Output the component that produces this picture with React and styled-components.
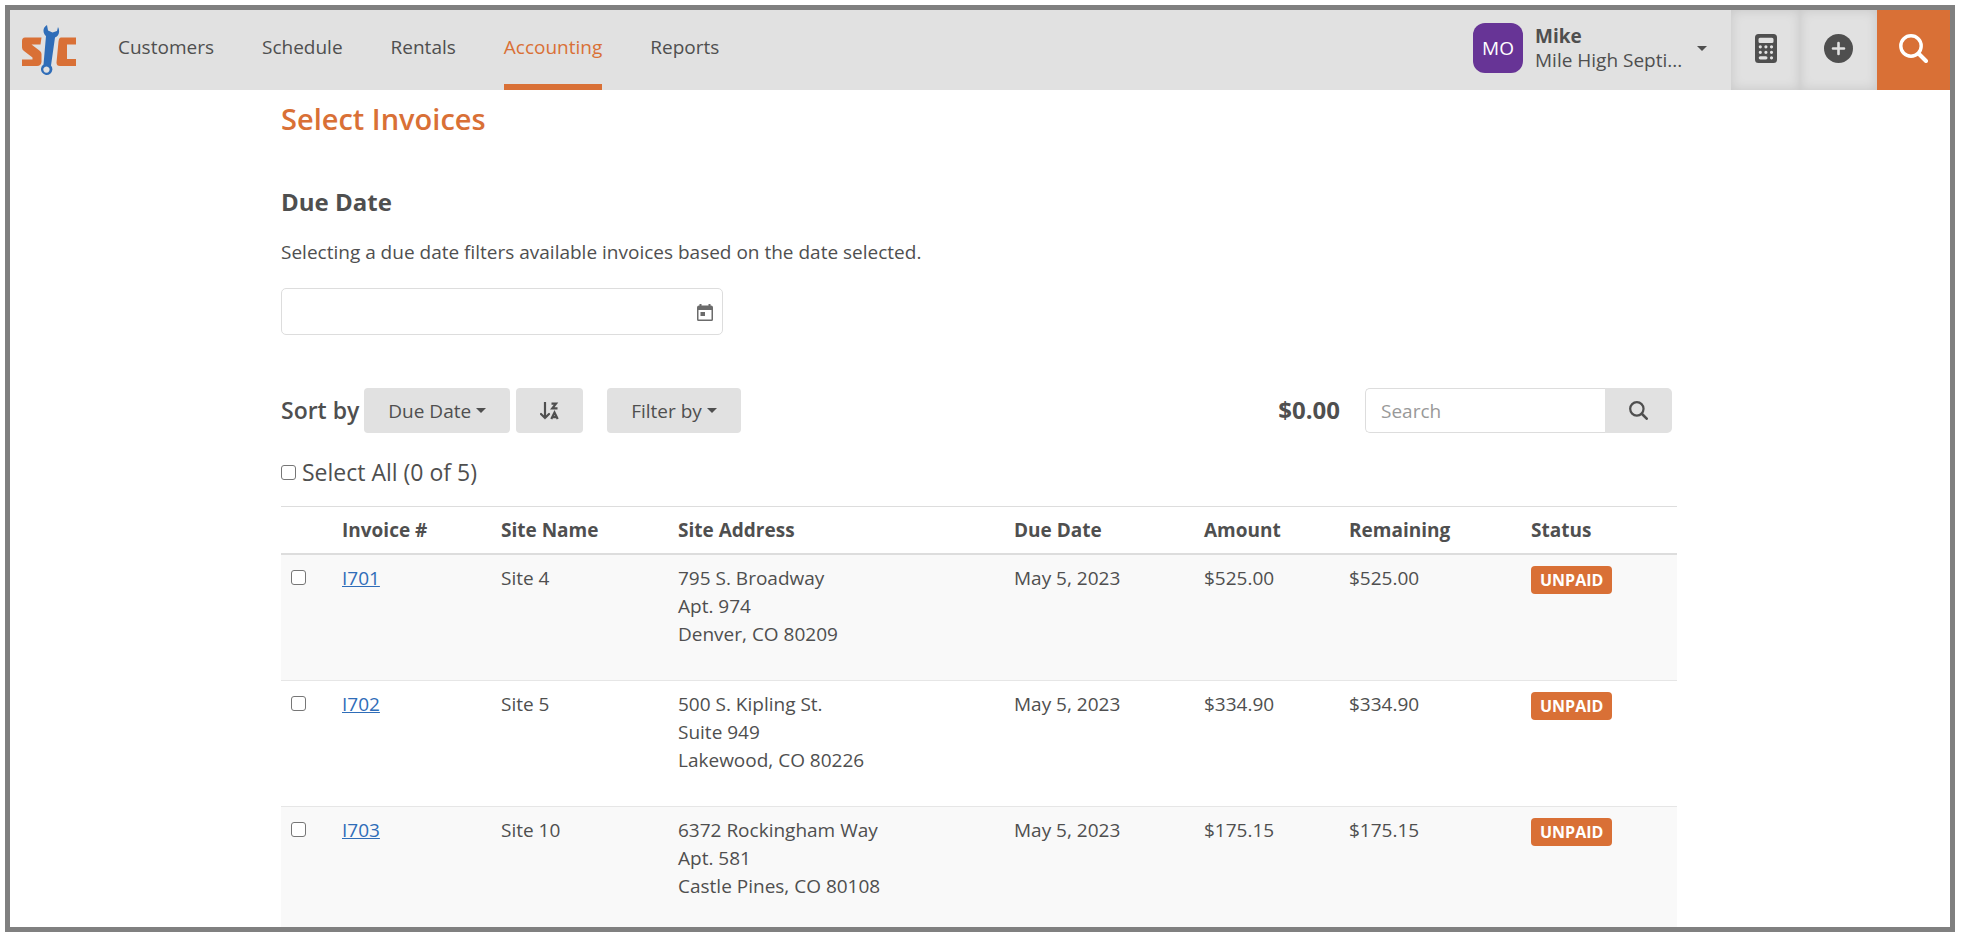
import React from "react";
import styled, { createGlobalStyle } from "styled-components";

const orange = "#d97036";
const text = "#4f4f4f";
const grey = "#e1e1e1";

const navItems = ["Customers", "Schedule", "Rentals", "Accounting", "Reports"];

const columns = [
  { label: "", width: 51 },
  { label: "Invoice #", width: 159 },
  { label: "Site Name", width: 177 },
  { label: "Site Address", width: 336 },
  { label: "Due Date", width: 190 },
  { label: "Amount", width: 145 },
  { label: "Remaining", width: 182 },
  { label: "Status", width: 156 },
];

const invoices = [
  {
    id: "I701",
    site: "Site 4",
    address: ["795 S. Broadway", "Apt. 974", "Denver, CO 80209"],
    due: "May 5, 2023",
    amount: "$525.00",
    remaining: "$525.00",
    status: "UNPAID",
  },
  {
    id: "I702",
    site: "Site 5",
    address: ["500 S. Kipling St.", "Suite 949", "Lakewood, CO 80226"],
    due: "May 5, 2023",
    amount: "$334.90",
    remaining: "$334.90",
    status: "UNPAID",
  },
  {
    id: "I703",
    site: "Site 10",
    address: ["6372 Rockingham Way", "Apt. 581", "Castle Pines, CO 80108"],
    due: "May 5, 2023",
    amount: "$175.15",
    remaining: "$175.15",
    status: "UNPAID",
  },
];

const Logo = () => (
  <svg width="56" height="52" viewBox="0 0 56 52" aria-hidden="true">
    <path
      fill={orange}
      d="M4 13.500H20.500L19.500 20.500H10.500L19 27Q20.500 28.500 20.500 30V38Q20 42 16 42H1V35.500H11.500V33.500L3 27Q1 25.500 1 23.500V17Q1 13.500 4 13.500Z"
    />
    <path fill={orange} d="M40 13.500H55V20.500H46V35H55V42H39Q35.500 42 35.500 38.500L37.500 17.500Q38 13.500 40 13.500Z" />
    <path
      fill="#2f6db8"
      fillRule="evenodd"
      d="M26 1C21.500 3.500 21.500 9 25 12L22.500 40.500A5.700 5.700 0 1 0 30 41.500L34 13.500C38.500 11.500 39 6.500 37 3L36 7L31.500 8.500L27 6.500ZM25.500 42.500A3.100 3.100 0 1 1 25.400 42.500Z"
    />
  </svg>
);

const CalculatorIcon = () => (
  <svg width="22" height="29" viewBox="0 0 22 29" aria-hidden="true">
    <path
      fill={text}
      fillRule="evenodd"
      d="M3.500 0H18.500Q22 0 22 3.500V25.500Q22 29 18.500 29H3.500Q0 29 0 25.500V3.500Q0 0 3.500 0ZM5 3.700Q3.500 3.700 3.500 5.200V7.500Q3.500 9 5 9H17Q18.500 9 18.500 7.500V5.200Q18.500 3.700 17 3.700Z"
    />
    <path
      fill="none"
      stroke={grey}
      strokeWidth="3.200"
      strokeLinecap="round"
      d="M5.300 12.800H5.310M10.900 12.800H10.910M16.500 12.800H16.510M5.300 18.300H5.310M10.900 18.300H10.910M16.500 18.300H16.510M5.300 23.800H10.900M16.500 23.800H16.510"
    />
  </svg>
);

const PlusIcon = () => (
  <svg width="29" height="29" viewBox="0 0 29 29" aria-hidden="true">
    <circle cx="14.500" cy="14.500" r="14.500" fill={text} />
    <path d="M14.500 9V20M9 14.500H20" stroke={grey} strokeWidth="2.600" strokeLinecap="round" />
  </svg>
);

const SearchIcon = ({ size }) => (
  <svg width={size} height={size} viewBox="0 0 29 29" fill="none" stroke="currentColor" aria-hidden="true">
    <circle cx="12" cy="12" r="10.200" strokeWidth="3.400" />
    <path d="M19.500 19.500L27 27" strokeWidth="4" strokeLinecap="round" />
  </svg>
);

const CalendarIcon = () => (
  <svg width="16" height="18" viewBox="0 0 16 18" aria-hidden="true">
    <path
      fill="#6b6b6b"
      fillRule="evenodd"
      d="M2.500 1H4.500V2.500H11.500V1H13.500V2.500H14Q16 2.500 16 4.500V16.500Q16 18 14.500 18H1.500Q0 18 0 16.500V4.500Q0 2.500 2 2.500H2.500ZM1.500 7V16.500H14.500V7ZM3.500 9H8V13H3.500Z"
    />
  </svg>
);

const SortIcon = () => (
  <svg width="19" height="18" viewBox="0 0 19 18" fill="none" stroke={text} strokeWidth="2.200" aria-hidden="true">
    <path d="M5 0.500V16M1 12L5 16L9 12" strokeLinecap="round" />
    <path d="M11.500 1.700H16L12.300 6.300H17.500" />
    <path d="M11.300 17L14.500 10.500L17.700 17M12.500 15.200H16.500" />
  </svg>
);

const App = () => (
  <>
    <GlobalStyle />
    <Frame>
      <Header>
        <Brand href="#" aria-label="Home">
          <Logo />
        </Brand>
        <Nav>
          {navItems.map((item) => (
            <NavLink key={item} href="#" $active={item === "Accounting"}>
              {item}
            </NavLink>
          ))}
        </Nav>
        <Account type="button">
          <Avatar>MO</Avatar>
          <AccountText>
            <strong>Mike</strong>
            <span>Mile High Septi...</span>
          </AccountText>
          <Caret />
        </Account>
        <HeaderButton type="button" aria-label="Calculator" $width={69}>
          <CalculatorIcon />
        </HeaderButton>
        <HeaderButton type="button" aria-label="Add" $width={77}>
          <PlusIcon />
        </HeaderButton>
        <SearchToggle type="button" aria-label="Search" $width={73}>
          <SearchIcon size={29} />
        </SearchToggle>
      </Header>

      <Content>
        <Title>Select Invoices</Title>
        <SectionTitle id="due-title">Due Date</SectionTitle>
        <Hint>Selecting a due date filters available invoices based on the date selected.</Hint>
        <DateField>
          <input type="text" aria-labelledby="due-title" />
          <CalendarIcon />
        </DateField>

        <Toolbar>
          <SortLabel>Sort by</SortLabel>
          <Button type="button">
            Due Date <Caret />
          </Button>
          <Button type="button" aria-label="Reverse order">
            <SortIcon />
          </Button>
          <FilterButton type="button">
            Filter by <Caret />
          </FilterButton>
          <Total>$0.00</Total>
          <SearchBox>
            <input type="text" placeholder="Search" aria-label="Search invoices" />
            <button type="button" aria-label="Run search">
              <SearchIcon size={19} />
            </button>
          </SearchBox>
        </Toolbar>

        <SelectAll>
          <Checkbox type="checkbox" />
          Select All (0 of 5)
        </SelectAll>

        <Table>
          <colgroup>
            {columns.map((column) => (
              <Col key={column.label} $width={column.width} />
            ))}
          </colgroup>
          <thead>
            <tr>
              {columns.map((column) => (
                <th key={column.label}>{column.label}</th>
              ))}
            </tr>
          </thead>
          <tbody>
            {invoices.map((invoice) => (
              <tr key={invoice.id}>
                <td>
                  <Checkbox type="checkbox" aria-label={invoice.id} />
                </td>
                <td>
                  <a href="#">{invoice.id}</a>
                </td>
                <td>{invoice.site}</td>
                <td>
                  {invoice.address.map((line) => (
                    <div key={line}>{line}</div>
                  ))}
                </td>
                <td>{invoice.due}</td>
                <td>{invoice.amount}</td>
                <td>{invoice.remaining}</td>
                <td>
                  <Badge>{invoice.status}</Badge>
                </td>
              </tr>
            ))}
          </tbody>
        </Table>
      </Content>
    </Frame>
  </>
);
export default App;

const GlobalStyle = createGlobalStyle`
  * {
    box-sizing: border-box;
  }
  body {
    margin: 0;
    background: #fff;
    color: ${text};
    font-family: "Open Sans", "Noto Sans", sans-serif;
    font-size: 19px;
    line-height: 28px;
  }
  button, input {
    font: inherit;
    color: inherit;
  }
  button {
    padding: 0;
    border: 0;
    cursor: pointer;
  }
  svg {
    display: block;
  }
`;

const Frame = styled.div`
  height: calc(100vh - 9px);
  margin: 5px 7px 4px 5px;
  border: 5px solid #808080;
  overflow: hidden;
`;

const Header = styled.header`
  display: flex;
  align-items: stretch;
  height: 80px;
  background: ${grey};
`;

const Brand = styled.a`
  padding: 14px 41px 0 11px;
`;

const Nav = styled.nav`
  display: flex;
  flex: 1;
  gap: 48px;
`;

const NavLink = styled.a`
  display: flex;
  align-items: center;
  border-bottom: 6px solid ${(props) => (props.$active ? orange : "transparent")};
  color: ${(props) => (props.$active ? orange : text)};
  text-decoration: none;
`;

const Account = styled.button`
  display: flex;
  align-items: center;
  padding: 0 24px 4px 0;
  background: none;
  text-align: left;
`;

const Avatar = styled.span`
  width: 50px;
  height: 50px;
  margin-right: 12px;
  border-radius: 12px;
  background: #673496;
  color: #fff;
  line-height: 50px;
  text-align: center;
`;

const AccountText = styled.span`
  display: flex;
  flex-direction: column;
  width: 162px;
  line-height: 24px;
`;

const Caret = styled.span`
  display: inline-block;
  border: 5px solid transparent;
  border-top-color: currentColor;
  border-bottom: 0;
`;

const HeaderButton = styled.button`
  display: flex;
  align-items: center;
  justify-content: center;
  width: ${(props) => props.$width}px;
  padding-bottom: 4px;
  background: ${grey};
  box-shadow: inset 0 0 12px rgba(0, 0, 0, 0.12);
`;

const SearchToggle = styled(HeaderButton)`
  background: ${orange};
  box-shadow: none;
  color: #fff;
`;

const Content = styled.main`
  max-width: 1398px;
  margin: 0 auto;
  padding-right: 2px;
`;

const Title = styled.h1`
  margin: 0;
  padding-top: 9px;
  color: ${orange};
  font-size: 29px;
  font-weight: 600;
  line-height: 40px;
`;

const SectionTitle = styled.h2`
  margin: 47px 0 0;
  font-size: 24px;
  font-weight: 700;
  line-height: 32px;
`;

const Hint = styled.p`
  margin: 20px 0 22px;
`;

const DateField = styled.div`
  display: flex;
  align-items: center;
  width: 442px;
  height: 47px;
  padding-right: 9px;
  border: 1px solid #ddd;
  border-radius: 5px;
  input {
    flex: 1;
    height: 100%;
    border: 0;
    background: none;
    outline: none;
  }
`;

const Toolbar = styled.div`
  display: flex;
  align-items: center;
  margin-top: 53px;
  padding-right: 5px;
`;

const SortLabel = styled.span`
  margin-right: 5px;
  padding-bottom: 2px;
  font-size: 23px;
  font-weight: 600;
`;

const Button = styled.button`
  display: flex;
  align-items: center;
  gap: 5px;
  height: 45px;
  margin-right: 6px;
  padding: 0 24px;
  border-radius: 4px;
  background: ${grey};
`;

const FilterButton = styled(Button)`
  margin-left: 18px;
`;

const Total = styled.span`
  margin-left: auto;
  margin-right: 25px;
  padding-bottom: 2px;
  font-size: 24px;
  font-weight: 700;
`;

const SearchBox = styled.div`
  display: flex;
  height: 45px;
  input {
    width: 240px;
    padding: 0 15px;
    border: 1px solid #ddd;
    border-right: 0;
    border-radius: 5px 0 0 5px;
    outline: none;
  }
  input::placeholder {
    color: #999;
  }
  button {
    display: flex;
    align-items: center;
    justify-content: center;
    width: 67px;
    border-radius: 0 5px 5px 0;
    background: ${grey};
  }
`;

const SelectAll = styled.label`
  display: flex;
  align-items: center;
  gap: 6px;
  margin: 23px 0 18px;
  font-size: 23px;
  line-height: 32px;
`;

const Checkbox = styled.input`
  appearance: none;
  width: 15px;
  height: 15px;
  margin: 0;
  border: 1px solid #767676;
  border-radius: 3px;
  background: #fff;
`;

const Table = styled.table`
  width: 100%;
  table-layout: fixed;
  border-collapse: collapse;
  th,
  td {
    padding: 9px 10px;
    text-align: left;
    vertical-align: top;
  }
  th {
    border-top: 1px solid #ddd;
    border-bottom: 2px solid #ddd;
    font-weight: 700;
  }
  td {
    height: 126px;
    border-bottom: 1px solid #e6e6e6;
  }
  tbody tr:nth-child(odd) {
    background: #f9f9f9;
  }
  a {
    color: #2f6db8;
  }
`;

const Col = styled.col`
  width: ${(props) => props.$width}px;
`;

const Badge = styled.span`
  display: inline-block;
  margin-top: 2px;
  padding: 0 9px;
  border-radius: 4px;
  background: ${orange};
  color: #fff;
  font-size: 16px;
  font-weight: 700;
  vertical-align: top;
`;
